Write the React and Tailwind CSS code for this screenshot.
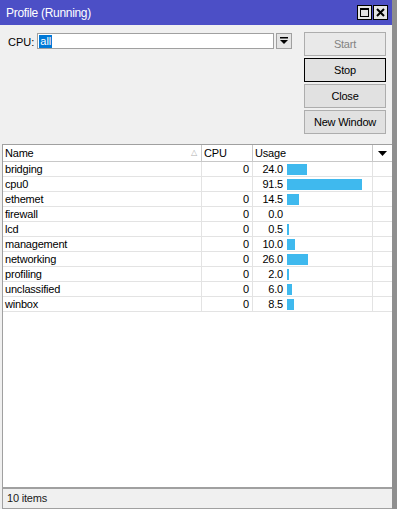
import React from 'react';

const rows = [
  { name: 'bridging', cpu: '0', usage: 24.0 },
  { name: 'cpu0', cpu: '', usage: 91.5 },
  { name: 'ethemet', cpu: '0', usage: 14.5 },
  { name: 'firewall', cpu: '0', usage: 0.0 },
  { name: 'lcd', cpu: '0', usage: 0.5 },
  { name: 'management', cpu: '0', usage: 10.0 },
  { name: 'networking', cpu: '0', usage: 26.0 },
  { name: 'profiling', cpu: '0', usage: 2.0 },
  { name: 'unclassified', cpu: '0', usage: 6.0 },
  { name: 'winbox', cpu: '0', usage: 8.5 },
];

const font = { fontFamily: '"Liberation Sans", Arial, sans-serif' };

const WinButton = ({ children, disabled = false, focused = false }) => (
  <button
    className={`h-6 w-[82px] bg-[#e1e1e1] text-[11px] tracking-[-0.2px] border ${
      focused ? 'border-black' : 'border-[#adadad]'
    } ${disabled ? 'text-[#838383] bg-[#e9e9e9]' : 'text-black'}`}
  >
    {children}
  </button>
);

const Row = ({ row }) => {
  const bar = Math.max(2, Math.round(row.usage * 0.82));
  return (
    <div className="flex h-[15px] border-b border-[#e3e3e3] text-[11px] tracking-[-0.2px] leading-[14px]">
      <div className="w-[199px] pl-[2px] border-r border-[#e3e3e3]">{row.name}</div>
      <div className="w-[51px] pr-[3px] text-right border-r border-[#e3e3e3]">{row.cpu}</div>
      <div className="w-[120px] flex items-center border-r border-[#e3e3e3]">
        <span className="w-[30px] text-right">{row.usage.toFixed(1)}</span>
        {row.usage > 0 && (
          <span className="ml-[4px] h-[11px] bg-[#3fb9ee]" style={{ width: bar }} />
        )}
      </div>
      <div className="flex-1" />
    </div>
  );
};

export default function App() {
  return (
    <div className="w-[397px] h-[509px] bg-[#f0f0f0] flex flex-col border-r-[5px] border-[#8f8f8f]" style={font}>
      {/* title bar */}
      <div className="h-[25px] bg-[#4c4fc6] flex items-center pl-[6px] pr-[4px]">
        <span className="text-white text-[12px] tracking-[-0.3px] flex-1">Profile (Running)</span>
        <div className="flex gap-[1px]">
          <div className="w-[15px] h-[15px] bg-[#e4e4e4] border border-black flex items-center justify-center">
            <div className="w-[9px] h-[9px] border border-black border-t-2" />
          </div>
          <div className="w-[15px] h-[15px] bg-[#e4e4e4] border border-black flex items-center justify-center">
            <svg width="9" height="9" viewBox="0 0 9 9">
              <path d="M1 1 L8 8 M8 1 L1 8" stroke="black" strokeWidth="2" />
            </svg>
          </div>
        </div>
      </div>

      {/* top controls */}
      <div className="flex h-[119px] pt-[7px]">
        <div className="flex-1 flex items-start pl-[8px] pt-[1px]">
          <span className="text-[11px] mr-[3px] mt-[1px]">CPU:</span>
          <div className="w-[237px] h-[16px] bg-white border border-[#a0a0a0] flex items-center pl-[1px]">
            <span className="bg-[#0078d7] text-white text-[11px] leading-[13px] px-[1px]">all</span>
          </div>
          <div className="ml-[2px] w-[16px] h-[16px] bg-[#e4e4e4] border border-[#a0a0a0] flex items-center justify-center">
            <svg width="8" height="8" viewBox="0 0 8 8">
              <rect x="0" y="0" width="8" height="1.5" fill="black" />
              <path d="M0 3 L8 3 L4 7 Z" fill="black" />
            </svg>
          </div>
        </div>
        <div className="flex flex-col gap-[2px] w-[82px] mr-[6px]">
          <WinButton disabled>Start</WinButton>
          <WinButton focused>Stop</WinButton>
          <WinButton>Close</WinButton>
          <WinButton>New Window</WinButton>
        </div>
      </div>

      {/* table */}
      <div className="flex-1 ml-[2px] flex flex-col border-l border-t border-b border-[#a0a0a0]">
        <div className="flex-1 bg-white border-b-2 border-[#a0a0a0]">
          <div className="flex h-[17px] border-b border-[#c8c8c8] text-[11px] tracking-[-0.2px] leading-[16px]">
            <div className="w-[199px] pl-[2px] border-r border-[#c8c8c8] flex justify-between pr-[4px]">
              <span>Name</span>
              <span className="text-[#b0b0b0] text-[8px]">△</span>
            </div>
            <div className="w-[51px] pl-[2px] border-r border-[#c8c8c8]">CPU</div>
            <div className="w-[120px] pl-[2px] border-r border-[#c8c8c8]">Usage</div>
            <div className="flex-1 flex items-center justify-center">
              <svg width="9" height="5" viewBox="0 0 9 5">
                <path d="M0 0 L9 0 L4.5 5 Z" fill="black" />
              </svg>
            </div>
          </div>
          {rows.map((r) => (
            <Row key={r.name} row={r} />
          ))}
        </div>
        <div className="h-[19px] flex items-center pl-[4px] text-[11px] tracking-[-0.2px] text-[#1a1a1a]">
          10 items
        </div>
      </div>
    </div>
  );
}
